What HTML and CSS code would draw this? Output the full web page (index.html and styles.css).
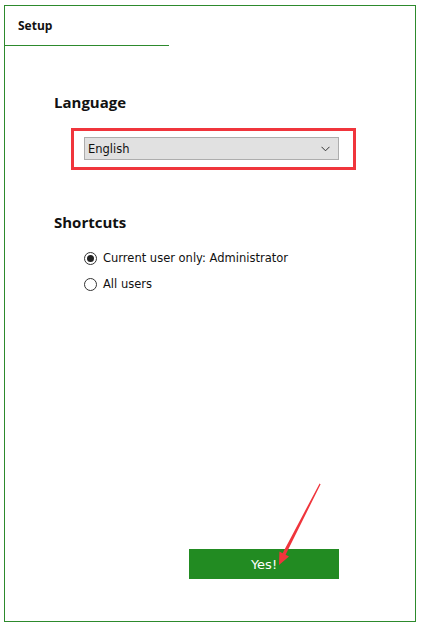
FILE: index.html
```html
<!DOCTYPE html>
<html>
<head>
<meta charset="utf-8">
<link rel="stylesheet" href="styles.css">
</head>
<body>
<div class="window">
  <div class="tab">Setup</div>
  <div class="content">
    <h2 class="heading">Language</h2>
    <div class="highlight">
      <div class="select">
        <span>English</span>
        <svg class="chev" width="9" height="6" viewBox="0 0 9 6"><path d="M0.5 0.8 L4.5 4.8 L8.5 0.8" fill="none" stroke="#333" stroke-width="1"/></svg>
      </div>
    </div>
    <h2 class="heading shortcuts">Shortcuts</h2>
    <div class="radios">
      <label class="radio"><span class="dot checked"></span>Current user only: Administrator</label>
      <label class="radio"><span class="dot"></span>All users</label>
    </div>
    <div class="spacer"></div>
    <div class="actions">
      <button class="yes">Yes!</button>
    </div>
  </div>
  <svg class="arrow" width="64" height="90" viewBox="0 0 64 90">
    <path d="M59.6 3.4 L60.6 4.2 L25.6 74.8 L29 76.6 L19 85 L19.4 71.6 L22.6 73.2 Z" fill="#f0353c"/>
  </svg>
</div>
</body>
</html>
```
FILE: styles.css
```css
html, body { margin: 0; padding: 0; background: #fff; }
body { width: 423px; height: 628px; position: relative; font-family: "DejaVu Sans", sans-serif; }
.window {
  position: absolute; left: 4px; top: 5px;
  width: 410px; height: 615px;
  border: 1px solid #2d8a2d;
  box-sizing: content-box;
  display: flex; flex-direction: column;
}
.tab {
  width: 151px; height: 39px;
  padding-left: 13px;
  border-bottom: 1px solid #2d8a2d;
  font-family: "Open Sans", sans-serif; font-weight: 700; font-size: 12px;
  line-height: 40px; color: #111;
}
.content { flex: 1; display: flex; flex-direction: column; padding-left: 49px; }
.heading {
  margin: 0; font-family: "Open Sans", sans-serif; font-weight: 700; font-size: 15px; color: #111;
  margin-top: 46px; line-height: 20px;
}
.shortcuts { margin-top: 42px; }
.highlight {
  margin-top: 16px; margin-left: 17px;
  width: 269px; height: 30px;
  border: 3px solid #f0353c;
  padding: 6px 0 0 10px; box-sizing: content-box;
}
.select {
  width: 255px; height: 23px; box-sizing: border-box;
  background: #e1e1e1; border: 1px solid #adadad;
  display: flex; align-items: center; justify-content: space-between;
  padding: 0 8px 0 3px;
  font-family: "DejaVu Sans", sans-serif; font-size: 11.5px; color: #111;
}
.radios { margin-top: 18px; margin-left: 30px; display: flex; flex-direction: column; gap: 10px; }
.radio { display: flex; align-items: center; gap: 6px; font-size: 11.5px; color: #111; height: 16px; font-family: "DejaVu Sans", sans-serif; }
.dot { width: 13px; height: 13px; border: 1px solid #333; border-radius: 50%; box-sizing: border-box; display: inline-flex; align-items: center; justify-content: center; }
.dot.checked::after { content: ""; width: 7px; height: 7px; border-radius: 50%; background: #222; }
.spacer { flex: 1; }
.actions { padding-left: 135px; margin-bottom: 42px; }
.yes {
  width: 150px; height: 30px; border: none; background: #228b22; color: #fff;
  font-family: "DejaVu Sans", sans-serif; font-size: 13px; padding: 0;
}
.arrow { position: absolute; left: 255px; top: 474px; }
```
